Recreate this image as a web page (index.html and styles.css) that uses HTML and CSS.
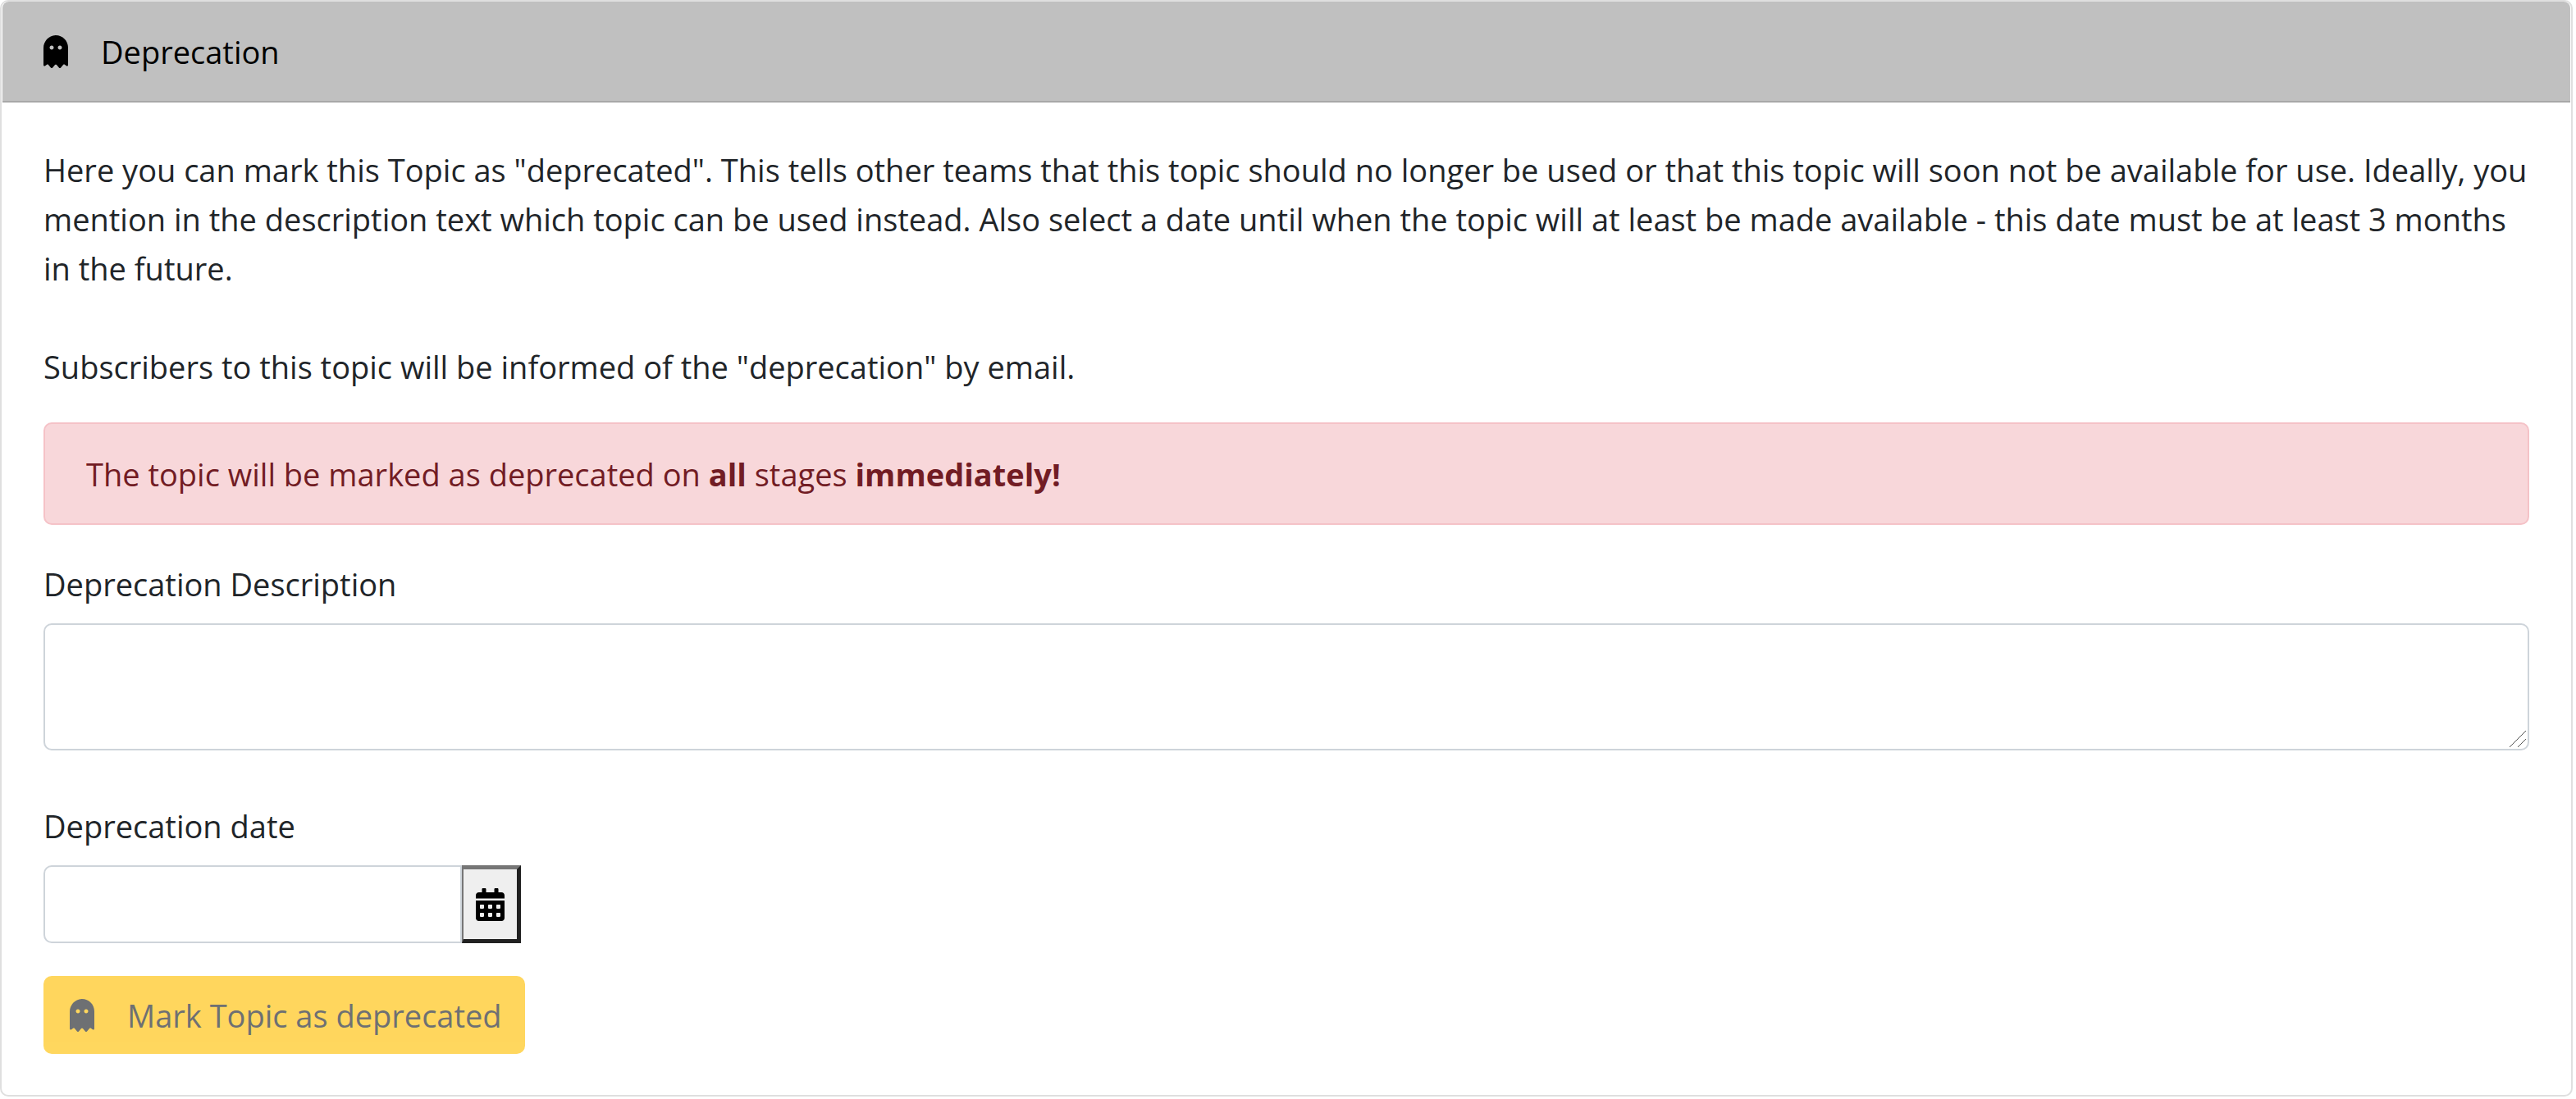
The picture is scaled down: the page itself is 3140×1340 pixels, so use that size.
FILE: index.html
```html
<!DOCTYPE html>
<html lang="en">
<head>
  <meta charset="utf-8">
  <meta name="viewport" content="width=device-width, initial-scale=1">
  <title>Deprecation</title>
  <link rel="stylesheet" href="styles.css">
</head>
<body>
  <svg class="sprite" aria-hidden="true">
    <symbol id="ghost" viewBox="0 0 384 512">
      <path d="M186.1.09C81.01 3.24 0 94.92 0 200.05v263.92c0 14.26 17.23 21.39 27.31 11.31l24.92-18.53c6.66-4.95 16-3.99 21.51 2.21l42.95 48.35c6.25 6.25 16.38 6.25 22.63 0l40.72-45.85c6.37-7.17 17.56-7.17 23.92 0l40.72 45.85c6.25 6.25 16.38 6.25 22.63 0l42.95-48.35c5.51-6.2 14.85-7.17 21.51-2.21l24.92 18.53c10.08 10.08 27.31 2.94 27.31-11.31V192C384 84 294.83-3.17 186.1.09zM128 224c-17.67 0-32-14.33-32-32s14.33-32 32-32 32 14.33 32 32-14.33 32-32 32zm128 0c-17.67 0-32-14.33-32-32s14.33-32 32-32 32 14.33 32 32-14.33 32-32 32z"/>
    </symbol>
    <symbol id="calendar" viewBox="0 0 448 512">
      <path d="M0 464c0 26.5 21.5 48 48 48h352c26.5 0 48-21.5 48-48V192H0v272zm320-196c0-6.6 5.4-12 12-12h40c6.6 0 12 5.4 12 12v40c0 6.6-5.4 12-12 12h-40c-6.6 0-12-5.4-12-12v-40zm0 128c0-6.6 5.4-12 12-12h40c6.6 0 12 5.4 12 12v40c0 6.6-5.4 12-12 12h-40c-6.6 0-12-5.4-12-12v-40zM192 268c0-6.6 5.4-12 12-12h40c6.6 0 12 5.4 12 12v40c0 6.6-5.4 12-12 12h-40c-6.6 0-12-5.4-12-12v-40zm0 128c0-6.6 5.4-12 12-12h40c6.6 0 12 5.4 12 12v40c0 6.6-5.4 12-12 12h-40c-6.6 0-12-5.4-12-12v-40zM64 268c0-6.6 5.4-12 12-12h40c6.6 0 12 5.4 12 12v40c0 6.6-5.4 12-12 12H76c-6.6 0-12-5.4-12-12v-40zm0 128c0-6.6 5.4-12 12-12h40c6.6 0 12 5.4 12 12v40c0 6.6-5.4 12-12 12H76c-6.6 0-12-5.4-12-12v-40zM400 64h-48V16c0-8.8-7.2-16-16-16h-32c-8.8 0-16 7.2-16 16v48H160V16c0-8.8-7.2-16-16-16h-32c-8.8 0-16 7.2-16 16v48H48C21.5 64 0 85.5 0 112v48h448v-48c0-26.5-21.5-48-48-48z"/>
    </symbol>
  </svg>

  <section class="card">
    <header class="card-header">
      <svg class="icon" aria-hidden="true"><use href="#ghost"/></svg>
      <span>Deprecation</span>
    </header>
    <form class="card-body">
      <p class="text">Here you can mark this Topic as "deprecated". This tells other teams that this topic should no longer be used or that this topic will soon not be available for use. Ideally, you mention in the description text which topic can be used instead. Also select a date until when the topic will at least be made available - this date must be at least 3 months in the future.</p>
      <p class="text">Subscribers to this topic will be informed of the "deprecation" by email.</p>
      <div class="alert" role="alert">The topic will be marked as deprecated on <strong>all</strong> stages <strong>immediately!</strong></div>
      <div class="field">
        <label for="description">Deprecation Description</label>
        <textarea class="control description" id="description"></textarea>
      </div>
      <div class="field">
        <label for="date">Deprecation date</label>
        <div class="date-group">
          <input class="control date" id="date" type="text">
          <button class="date-toggle" type="button" aria-label="Open calendar">
            <svg class="icon icon-calendar" aria-hidden="true"><use href="#calendar"/></svg>
          </button>
        </div>
      </div>
      <button class="submit" type="submit" disabled>
        <svg class="icon" aria-hidden="true"><use href="#ghost"/></svg>
        <span>Mark Topic as deprecated</span>
      </button>
    </form>
  </section>
</body>
</html>
```

FILE: styles.css
```css
* {
  box-sizing: border-box;
}

body {
  margin: 0;
  padding: 0 4px 3px 0;
  background: #fff;
  color: #212529;
  font-family: "Segoe UI", "Open Sans", "Noto Sans", sans-serif;
  font-size: 38px;
  line-height: 60px;
}

.sprite {
  display: none;
}

.icon {
  flex: none;
  width: 30px;
  height: 40px;
  fill: currentColor;
}

.icon-calendar {
  width: 35px;
}

.card {
  padding: 0 1px;
  border: 2px solid #dfdfdf;
  border-radius: 10px;
}

.card-header {
  display: flex;
  align-items: center;
  gap: 40px;
  padding: 31px 50px 30px;
  border-bottom: 2px solid #a8a8a8;
  border-radius: 8px 8px 0 0;
  background: #c0c0c0;
  color: #000;
}

.card-body {
  display: flex;
  flex-direction: column;
  align-items: flex-start;
  padding: 52px 50px 50px;
}

.text {
  margin: 0 0 60px;
}

.text + .text {
  margin-bottom: 38px;
}

.alert {
  width: 100%;
  margin-bottom: 42px;
  padding: 31px 50px 30px;
  border: 2px solid #f5c2c7;
  border-radius: 10px;
  background: #f8d7da;
  color: #721c24;
}

.field {
  display: flex;
  flex-direction: column;
  gap: 18px;
  width: 100%;
}

.control {
  border: 2px solid #ced4da;
  border-radius: 10px;
  background: #fff;
  color: inherit;
  font: inherit;
}

.description {
  width: 100%;
  height: 155px;
  margin-bottom: 62px;
  padding: 15px 30px;
  background: url("data:image/svg+xml,%3Csvg xmlns='http://www.w3.org/2000/svg' width='20' height='20'%3E%3Cpath d='M0 20L20 0M10 20L20 10' stroke='%23555' fill='none'/%3E%3C/svg%3E") no-repeat right 2px bottom 2px;
  resize: vertical;
}

.description::-webkit-resizer {
  background: transparent;
}

.date-group {
  display: flex;
  height: 95px;
  margin-bottom: 40px;
}

.date {
  width: 510px;
  padding: 15px 30px;
  border-radius: 10px 0 0 10px;
}

.date-toggle {
  display: flex;
  align-items: center;
  padding: 0 15px;
  border: 5px solid;
  border-left-width: 2px;
  border-color: #767676 #212121 #212121 #767676;
  background: #efefef;
  color: #000;
}

.submit {
  display: flex;
  align-items: center;
  gap: 40px;
  height: 95px;
  padding: 0 28px 0 32px;
  border: 0;
  border-radius: 10px;
  background: #ffc107;
  color: #212529;
  font: inherit;
  opacity: 0.65;
}
```
